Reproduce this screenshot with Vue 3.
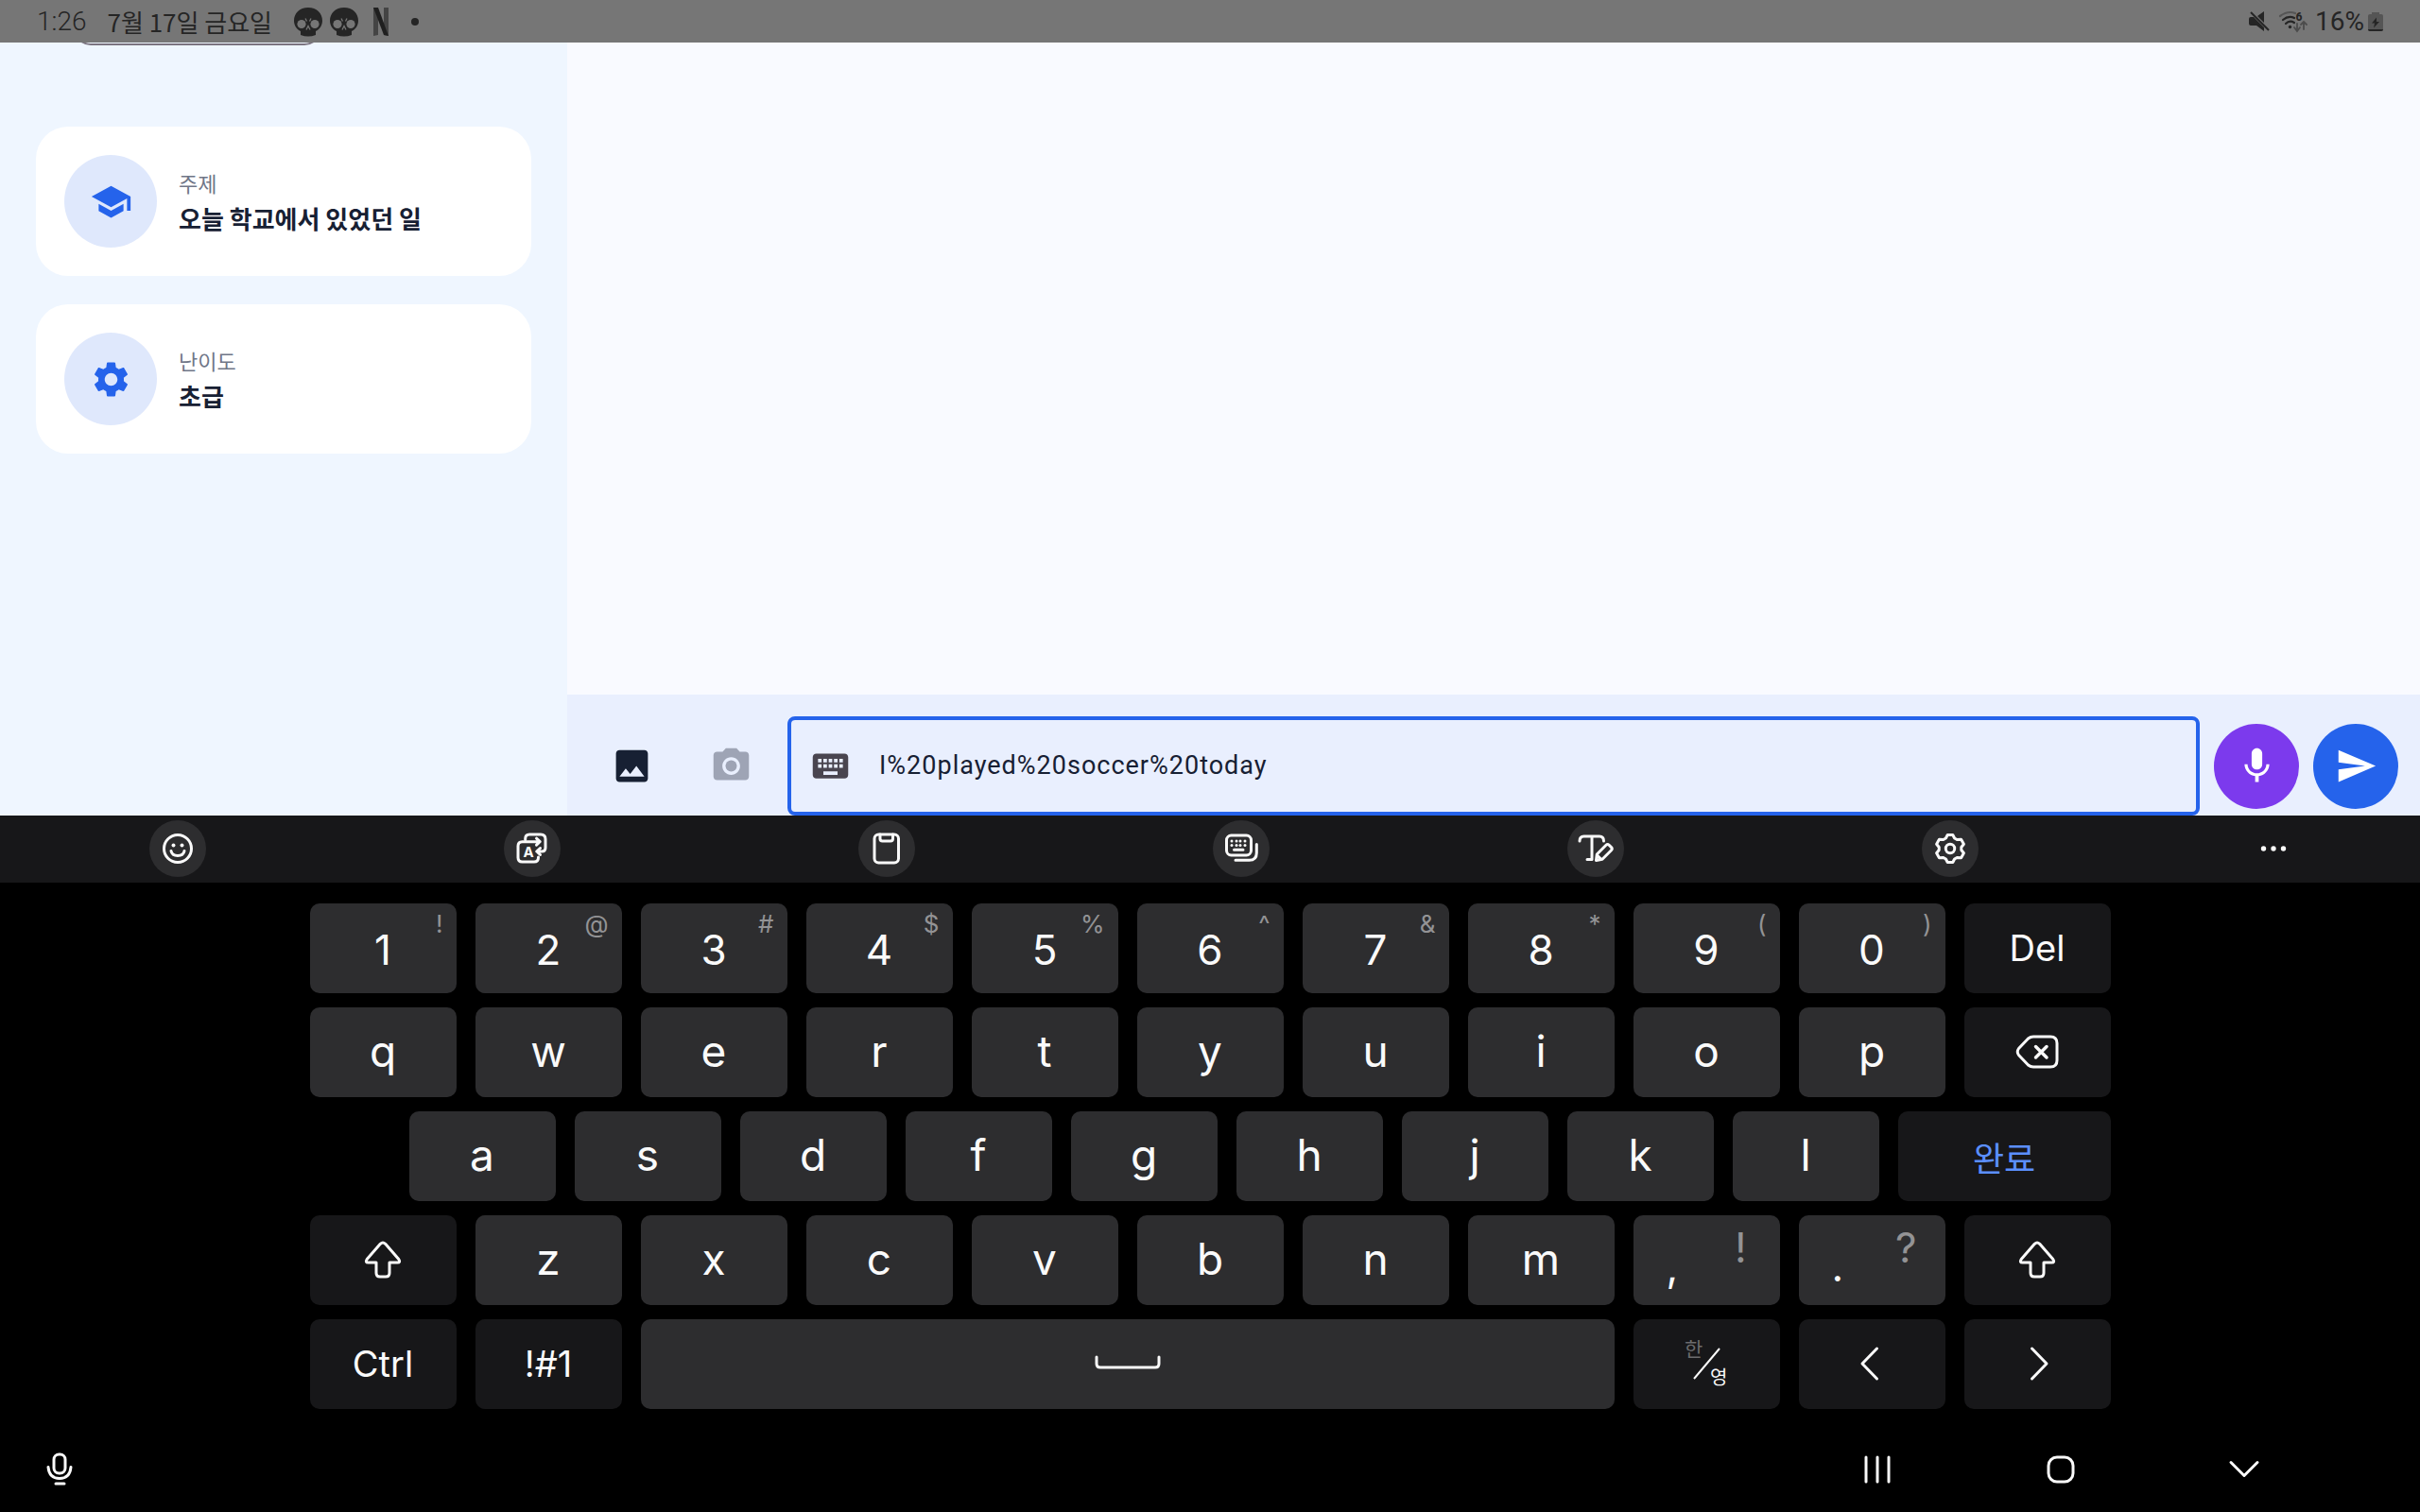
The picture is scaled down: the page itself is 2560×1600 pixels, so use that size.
<script setup>
import { ref } from 'vue';

const message = ref('I%20played%20soccer%20today');

const infoCards = [
    { id: 'topic', icon: 'school', label: '주제', value: '오늘 학교에서 있었던 일' },
    { id: 'level', icon: 'gear', label: '난이도', value: '초급' }
];

const tools = ['emoji', 'translate', 'clipboard', 'keyboards', 'text-edit', 'settings', 'more'];

const toKeys = (letters) => letters.split('').map((label) => ({ id: label, label }));

const symbols = '!@#$%^&*()';

const rows = [
    [
        ...'1234567890'.split('').map((label, i) => ({ id: label, label, hint: symbols[i] })),
        { id: 'del', label: 'Del', fn: true }
    ],
    [...toKeys('qwertyuiop'), { id: 'backspace', icon: 'backspace', fn: true }],
    [...toKeys('asdfghjkl'), { id: 'done', label: '완료', fn: true, kind: 'done' }],
    [
        { id: 'shift-left', icon: 'shift', fn: true },
        ...toKeys('zxcvbnm'),
        { id: 'comma', label: ',', alt: '!' },
        { id: 'period', label: '.', alt: '?' },
        { id: 'shift-right', icon: 'shift', fn: true }
    ],
    [
        { id: 'ctrl', label: 'Ctrl', fn: true },
        { id: 'symbols', label: '!#1', fn: true },
        { id: 'space', icon: 'space', kind: 'space' },
        { id: 'language', icon: 'language', fn: true },
        { id: 'left', icon: 'left', fn: true },
        { id: 'right', icon: 'right', fn: true }
    ]
];

const navButtons = ['recents', 'home', 'hide'];

const keyClass = (key) => ({
    'key-fn': key.fn,
    'key-number': key.hint,
    'key-done': key.kind === 'done',
    'key-space': key.kind === 'space'
});
</script>

<template>
    <div class="screen">
        <header class="status-bar">
            <div class="status-left">
                <span class="clock">1:26</span>
                <span class="date">7월 17일 금요일</span>
                <div class="notifications">
                    <svg v-for="n in 2" :key="n" width="30" height="30" viewBox="0 0 30 30">
                        <path fill="#252525" d="M15 0C6 0 0 6 0 14c0 5 3 9 7 11v4q8 3 16 0v-4c4-2 7-6 7-11C30 6 24 0 15 0Z" />
                        <circle cx="8" cy="17.500" r="4.600" fill="#767676" />
                        <circle cx="22" cy="17.500" r="4.600" fill="#767676" />
                        <path d="M12 11.500l1.500 3M18 11.500l-1.500 3M13 23.500l2-4 2 4" fill="none" stroke="#767676" stroke-width="1.300" />
                    </svg>
                    <svg class="ribbon" width="16" height="30" viewBox="0 0 16 30">
                        <path fill="#444" d="M0 0h5v29l-5 1ZM11 0h5v30l-5-1Z" />
                        <path fill="#1f1f1f" d="M0 0h5l11 30-5-1Z" />
                    </svg>
                    <span class="more-dot"></span>
                </div>
            </div>
            <div class="status-right">
                <svg width="22" height="22" viewBox="0 0 22 22">
                    <path fill="#252525" d="M0 8q0-2 2-2h3L16 17v4L8 15H2q-2 0-2-2ZM9 5l7-5v12Z" />
                    <path d="M2 1l19 19" stroke="#252525" stroke-width="2" />
                </svg>
                <svg class="wifi" width="30" height="22" viewBox="0 0 30 22">
                    <g fill="none" stroke-width="2.200" stroke-linecap="round">
                        <path stroke="#555" d="M1 5Q9-1 17 2" />
                        <path stroke="#252525" d="M4 9q6-5 12-2M7 13q4-4 9-1" />
                        <path stroke="#4c4c4c" stroke-width="1.800" d="M19 13v7M16 17l3 4 3-4M26 19v-8M23 14l3-3 3 3" />
                    </g>
                    <circle cx="11.500" cy="16.500" r="1.700" fill="#252525" />
                    <text x="17.500" y="10" font-size="12" font-weight="800" fill="#252525">6</text>
                </svg>
                <span>16%</span>
                <svg class="battery" width="16" height="20" viewBox="0 0 16 20">
                    <path fill="#555" d="M4 0h8v2h2q2 0 2 2v14q0 2-2 2H2q-2 0-2-2V4q0-2 2-2h2Z" />
                    <path fill="#252525" d="M0 18h16q0 2-2 2H2q-2 0-2-2ZM9 5.500l-5 6h3l-1 5 6-6.500H9Z" />
                </svg>
            </div>
        </header>

        <main class="app">
            <aside class="sidebar">
                <div class="chip" aria-hidden="true"></div>
                <div v-for="card in infoCards" :key="card.id" class="info-card">
                    <div class="info-icon">
                        <svg width="45" height="45" viewBox="0 0 24 24" fill="#2563eb">
                            <path v-if="card.icon === 'school'" d="M5 13.180v4L12 21l7-3.820v-4L12 17l-7-3.820zM12 3L1 9l11 6 9-4.910V17h2V9L12 3z" />
                            <path v-else d="M19.140 12.940c.04-.3.06-.61.06-.94 0-.32-.02-.64-.07-.94l2.030-1.580c.18-.14.23-.41.12-.61l-1.920-3.320c-.12-.22-.37-.29-.59-.22l-2.390.96c-.5-.38-1.030-.7-1.620-.94l-.36-2.540c-.04-.24-.24-.41-.48-.41h-3.840c-.24 0-.43.17-.47.41l-.36 2.540c-.59.24-1.130.57-1.620.94l-2.390-.96c-.22-.08-.47 0-.59.22L2.740 8.870c-.12.21-.08.47.12.61l2.030 1.580c-.05.3-.09.63-.09.94s.02.64.07.94l-2.030 1.580c-.18.14-.23.41-.12.61l1.920 3.320c.12.22.37.29.59.22l2.390-.96c.5.38 1.030.7 1.620.94l.36 2.540c.05.24.24.41.48.41h3.840c.24 0 .44-.17.47-.41l.36-2.540c.59-.24 1.130-.56 1.620-.94l2.390.96c.22.08.47 0 .59-.22l1.920-3.320c.12-.22.07-.47-.12-.61l-2.010-1.580zM12 15.600c-1.980 0-3.600-1.620-3.600-3.600s1.620-3.600 3.600-3.600 3.600 1.620 3.600 3.600-1.620 3.600-3.600 3.600z" />
                        </svg>
                    </div>
                    <div class="info-text">
                        <span class="info-label">{{ card.label }}</span>
                        <strong class="info-value">{{ card.value }}</strong>
                    </div>
                </div>
            </aside>

            <section class="chat">
                <div class="messages"></div>
                <form class="composer" @submit.prevent>
                    <button type="button" class="round-button" aria-label="사진">
                        <svg width="45" height="45" viewBox="0 0 24 24" fill="#172033">
                            <path d="M21 19V5c0-1.100-.9-2-2-2H5c-1.100 0-2 .9-2 2v14c0 1.100.9 2 2 2h14c1.100 0 2-.9 2-2zM8.500 13.500l2.500 3.010L14.500 12l4.500 6H5l3.500-4.500z" />
                        </svg>
                    </button>
                    <button type="button" class="round-button" aria-label="카메라">
                        <svg width="45" height="45" viewBox="0 0 24 24" fill="#9ea4b5">
                            <circle cx="12" cy="12" r="3.200" />
                            <path d="M9 2L7.170 4H4c-1.100 0-2 .9-2 2v12c0 1.100.9 2 2 2h16c1.100 0 2-.9 2-2V6c0-1.100-.9-2-2-2h-3.170L15 2H9zm3 15c-2.760 0-5-2.240-5-5s2.240-5 5-5 5 2.240 5 5-2.240 5-5 5z" />
                        </svg>
                    </button>
                    <label class="field">
                        <svg width="45" height="45" viewBox="0 0 24 24" fill="#49454f">
                            <path d="M20 5H4c-1.100 0-1.990.9-1.990 2L2 17c0 1.100.9 2 2 2h16c1.100 0 2-.9 2-2V7c0-1.100-.9-2-2-2zm-9 3h2v2h-2V8zm0 3h2v2h-2v-2zM8 8h2v2H8V8zm0 3h2v2H8v-2zm-1 2H5v-2h2v2zm0-3H5V8h2v2zm9 7H8v-2h8v2zm0-4h-2v-2h2v2zm0-3h-2V8h2v2zm3 3h-2v-2h2v2zm0-3h-2V8h2v2z" />
                        </svg>
                        <input v-model="message" type="text" aria-label="메시지" />
                    </label>
                    <button type="button" class="round-button mic" aria-label="음성">
                        <svg width="45" height="45" viewBox="0 0 24 24" fill="#fff">
                            <path d="M12 14c1.660 0 2.990-1.340 2.990-3L15 5c0-1.660-1.340-3-3-3S9 3.340 9 5v6c0 1.660 1.340 3 3 3zm5.300-3c0 3-2.540 5.100-5.300 5.100S6.700 14 6.700 11H5c0 3.410 2.720 6.230 6 6.720V21h2v-3.280c3.280-.48 6-3.300 6-6.720h-1.700z" />
                        </svg>
                    </button>
                    <button type="submit" class="round-button send" aria-label="보내기">
                        <svg width="45" height="45" viewBox="0 0 24 24" fill="#fff">
                            <path d="M2.010 21L23 12 2.010 3 2 10l15 2-15 2z" />
                        </svg>
                    </button>
                </form>
            </section>
        </main>

        <section class="keyboard">
            <div class="toolbar">
                <div v-for="tool in tools" :key="tool" class="tool-cell">
                    <button type="button" class="tool" :class="{ plain: tool === 'more' }" :aria-label="tool">
                        <svg class="line-icon" width="60" height="60" viewBox="0 0 60 60">
                            <g v-if="tool === 'emoji'">
                                <circle cx="30" cy="30" r="14.500" />
                                <path d="M23 32.500q1 5 7 5t7-5" />
                                <circle class="solid" cx="25.500" cy="26.500" r="2" />
                                <circle class="solid" cx="34.500" cy="26.500" r="2" />
                            </g>
                            <g v-else-if="tool === 'translate'">
                                <path d="M22.700 20.500v-1q0-4.500 4.500-4.500H39q5 0 5 5v9q0 4-4 4h-5M38.500 29.500l-3.800 3.500 3.800 3.500" />
                                <path d="M38 22.700H19.500q-4.500 0-4.500 4.500v12.300q0 4.500 4.500 4.500H32q4.500 0 4.500-4.500V39M34.500 19.200l3.700 3.500-3.700 3.500" />
                                <text x="26" y="39" font-size="15" font-weight="700" text-anchor="middle">A</text>
                            </g>
                            <g v-else-if="tool === 'clipboard'">
                                <rect x="17" y="15" width="25.500" height="30" rx="4.500" />
                                <path d="M23 15v4.500q0 2.500 2.500 2.500h8.500q2.500 0 2.500-2.500V15" />
                            </g>
                            <g v-else-if="tool === 'keyboards'">
                                <rect x="14.500" y="16" width="26" height="21" rx="5" />
                                <path d="M24 42.300h14.500q7.800 0 7.800-7.800v-9M22.500 31.300h9.500" />
                                <g v-for="x in [20, 25, 29, 34]" :key="x" class="solid">
                                    <circle :cx="x" cy="22" r="1.500" />
                                    <circle :cx="x" cy="26.500" r="1.500" />
                                </g>
                            </g>
                            <g v-else-if="tool === 'text-edit'">
                                <path d="M13 22q0-5 4.500-5H34q4.500 0 4.500 5M26 17v24.500h-5" />
                                <path d="M30.500 42.500l.8-6.500 9.700-9.700q1.500-1.500 3.200 0l2.300 2.300q1.500 1.700 0 3.200L37 41.300l-6.500 1.200M31.500 37l4.500 4.500" />
                            </g>
                            <g v-else-if="tool === 'settings'">
                                <path transform="translate(30 30)" d="M-2.800-14.500H2.800L4.600-11 7.200-9.500 11.600-9.700 14.400-4.800 11.800-1.500V1.500L14.400 4.800 11.600 9.700 7.200 9.500 4.600 11 2.800 14.500H-2.800L-4.600 11-7.200 9.500-11.600 9.700-14.400 4.800-11.800 1.500V-1.500L-14.400-4.800-11.600-9.700-7.200-9.500-4.600-11Z" />
                                <circle cx="30" cy="30" r="4.700" />
                            </g>
                            <g v-else class="solid">
                                <circle cx="19.500" cy="30" r="2.700" />
                                <circle cx="30" cy="30" r="2.700" />
                                <circle cx="40.500" cy="30" r="2.700" />
                            </g>
                        </svg>
                    </button>
                </div>
            </div>

            <div class="keys">
                <div v-for="(row, index) in rows" :key="index" class="key-row">
                    <span v-if="index === 2" class="key-indent"></span>
                    <button v-for="key in row" :key="key.id" type="button" class="key" :class="keyClass(key)" :aria-label="key.id">
                        <span v-if="key.hint" class="hint">{{ key.hint }}</span>
                        <span v-if="key.alt" class="pair">
                            <span class="pair-main">{{ key.label }}</span>
                            <span class="pair-alt">{{ key.alt }}</span>
                        </span>
                        <span v-else-if="key.label">{{ key.label }}</span>
                        <svg v-else-if="key.icon === 'backspace'" class="line-icon" width="48" height="40" viewBox="0 0 48 40">
                            <path d="M14.500 6Q17 4 20 4H38q7 0 7 7v18q0 7-7 7H20q-3 0-5.500-2L4.500 23.500q-2.500-3.500 0-7Z" />
                            <path stroke-width="3.500" d="M22.500 14.500l11.500 11.500M34 14.500L22.500 26" />
                        </svg>
                        <svg v-else-if="key.icon === 'shift'" class="line-icon" width="40" height="40" viewBox="0 0 40 40">
                            <path d="M17.300 3.300Q20 .800 22.700 3.300L36.800 19.500Q39 23 35.500 23H27V34q0 4-4 4H17q-4 0-4-4V23H4.500Q1 23 3.200 19.500Z" />
                        </svg>
                        <svg v-else-if="key.icon === 'space'" class="line-icon" width="70" height="18" viewBox="0 0 70 18">
                            <path d="M2 3v7q0 4 4 4h58q4 0 4-4V3" />
                        </svg>
                        <svg v-else-if="key.icon === 'language'" class="language" width="56" height="64" viewBox="0 0 56 64">
                            <text x="5" y="24" font-size="21" fill="#6c6c6e">한</text>
                            <text x="32" y="54" font-size="20" font-weight="400" fill="#fafafa">영</text>
                            <path d="M15 48L42 16" stroke="#fafafa" stroke-width="2" />
                        </svg>
                        <svg v-else class="line-icon" width="40" height="40" viewBox="0 0 40 40">
                            <path v-if="key.icon === 'left'" d="M25.500 4L10 20l15.500 16" />
                            <path v-else d="M14.500 4L30 20 14.500 36" />
                        </svg>
                    </button>
                </div>
            </div>

            <nav class="nav-bar">
                <button type="button" class="nav-button nav-mic" aria-label="음성 입력">
                    <svg class="line-icon" width="40" height="40" viewBox="0 0 40 40">
                        <rect x="14" y="4" width="12" height="20" rx="5.500" />
                        <path d="M8 17.500q1 12 12 12t12-12M16 35h9" />
                    </svg>
                </button>
                <button v-for="item in navButtons" :key="item" type="button" class="nav-button" :aria-label="item">
                    <svg class="line-icon" width="40" height="40" viewBox="0 0 40 40">
                        <path v-if="item === 'recents'" d="M8 7v26M20 7v26M32 7v26" />
                        <rect v-else-if="item === 'home'" x="7" y="7" width="26" height="26" rx="9" />
                        <path v-else d="M6 12.500l14 14 14-14" />
                    </svg>
                </button>
            </nav>
        </section>
    </div>
</template>

<style>
body {
    margin: 0;
}
</style>

<style scoped>
.screen {
    display: flex;
    flex-direction: column;
    min-height: 100vh;
    background-color: #000;
    font-family: Inter, "Noto Sans CJK KR", sans-serif;
}

button {
    border: none;
    padding: 0;
    background: none;
    color: inherit;
    font: inherit;
}

svg {
    display: block;
    flex: none;
    overflow: visible;
}

/* Status bar */
.status-bar {
    display: flex;
    justify-content: space-between;
    align-items: center;
    height: 45px;
    padding: 0 39px;
    background-color: #767676;
    color: #252525;
    font-family: Roboto, "Noto Sans CJK KR", sans-serif;
    font-size: 28px;
    line-height: 45px;
}

.status-left,
.status-right,
.notifications {
    display: flex;
    align-items: center;
}

.clock {
    font-weight: 300;
}

.date {
    margin-left: 22px;
    font-family: "Noto Sans CJK KR", sans-serif;
    font-size: 26px;
}

.notifications {
    gap: 8px;
    margin-left: 23px;
}

.ribbon {
    margin-left: 8px;
}

.more-dot {
    width: 8px;
    height: 8px;
    margin-left: 16px;
    border-radius: 50%;
    background-color: #252525;
}

.wifi {
    margin: 0 8px 0 10px;
}

.battery {
    margin-left: 4px;
}

/* App area */
.app {
    display: flex;
    flex: 1;
    min-height: 0;
}

.sidebar {
    box-sizing: border-box;
    width: 600px;
    padding: 0 38px;
    overflow: hidden;
    background-color: #eff6ff;
}

/* Scrolled almost out of view, only the lower edge shows */
.chip {
    box-sizing: border-box;
    width: 262px;
    height: 75px;
    margin: -72px 0 86px 40px;
    border: 2px solid #7b7480;
    border-radius: 18px;
}

.info-card {
    display: flex;
    align-items: center;
    gap: 23px;
    margin-bottom: 30px;
    padding: 30px;
    border-radius: 34px;
    background-color: #fff;
    font-family: "Noto Sans CJK KR", sans-serif;
}

.info-icon {
    display: flex;
    justify-content: center;
    align-items: center;
    width: 98px;
    height: 98px;
    border-radius: 50%;
    background-color: #dfe8fc;
}

.info-text {
    display: flex;
    flex-direction: column;
    padding-bottom: 2px;
}

.info-label {
    color: #6f7687;
    font-size: 22px;
    line-height: 38px;
}

.info-value {
    color: #172033;
    font-size: 26px;
    line-height: 38px;
    font-weight: 700;
}

.chat {
    display: flex;
    flex: 1;
    flex-direction: column;
    background-color: #f9faff;
}

.messages {
    flex: 1;
}

.composer {
    display: flex;
    align-items: center;
    gap: 15px;
    padding: 23px 23px 0;
    background-color: #e9effe;
}

.round-button {
    display: flex;
    flex: none;
    justify-content: center;
    align-items: center;
    width: 90px;
    height: 90px;
    border-radius: 50%;
}

.mic {
    background-color: #7c3aed;
}

.send {
    background-color: #2563eb;
}

.field {
    display: flex;
    flex: 1;
    align-items: center;
    gap: 29px;
    box-sizing: border-box;
    height: 105px;
    padding: 0 19px;
    border: 4px solid #2563eb;
    border-radius: 8px;
}

.field input {
    flex: 1;
    min-width: 0;
    border: none;
    outline: none;
    padding: 0 0 2px;
    background: none;
    color: #172033;
    font-family: Roboto, sans-serif;
    font-size: 27px;
    letter-spacing: 1px;
}

/* Keyboard */
.keyboard {
    background-color: #000;
    color: #fafafa;
}

.toolbar {
    display: grid;
    grid-template-columns: repeat(6, 75fr) 62fr;
    padding: 5px 0 6px;
    background-color: #171719;
}

.tool-cell {
    display: flex;
    justify-content: center;
}

.tool {
    border-radius: 50%;
    background-color: #2d2d2f;
}

.tool.plain {
    background: none;
}

.line-icon {
    fill: none;
    stroke: #fafafa;
    stroke-width: 3;
    stroke-linecap: round;
    stroke-linejoin: round;
}

.line-icon .solid,
.line-icon text {
    fill: #fafafa;
    stroke: none;
}

.keys {
    display: flex;
    flex-direction: column;
    gap: 15px;
    width: 90%;
    max-width: 1905px;
    margin: 0 auto;
    padding: 22px 0 19px;
}

.key-row {
    display: flex;
    gap: 20px;
}

.key-indent {
    flex: 85 1 0;
}

.key {
    position: relative;
    display: flex;
    flex: 155 1 0;
    justify-content: center;
    align-items: center;
    box-sizing: border-box;
    min-width: 0;
    height: 95px;
    padding-bottom: 4px;
    border-radius: 10px;
    background-color: #2d2d2f;
    font-size: 46px;
    line-height: 54px;
}

.key-fn {
    padding-bottom: 2px;
    background-color: #171719;
    font-size: 38px;
}

.key-number {
    padding: 2px 0 0;
    font-size: 44px;
}

.key-done {
    flex-grow: 225;
    padding: 6px 0 0;
    color: #5b8fff;
    font-size: 36px;
}

.key-space {
    flex-grow: 1030;
}

.hint {
    position: absolute;
    top: 6px;
    right: 14px;
    color: #939395;
    font-size: 26px;
    line-height: 32px;
}

.pair {
    display: flex;
    width: 100%;
    padding: 0 5px;
    font-size: 44px;
}

.pair span {
    flex: 1;
}

.pair-main {
    padding-top: 20px;
}

.pair-alt {
    padding-bottom: 24px;
    color: #939395;
}

.language {
    font-family: "Noto Sans CJK KR", sans-serif;
}

/* System navigation */
.nav-bar {
    display: flex;
    height: 90px;
    padding-right: 89px;
}

.nav-button {
    display: flex;
    justify-content: center;
    align-items: center;
    width: 194px;
}

.nav-mic {
    width: 126px;
    margin-right: auto;
}
</style>
